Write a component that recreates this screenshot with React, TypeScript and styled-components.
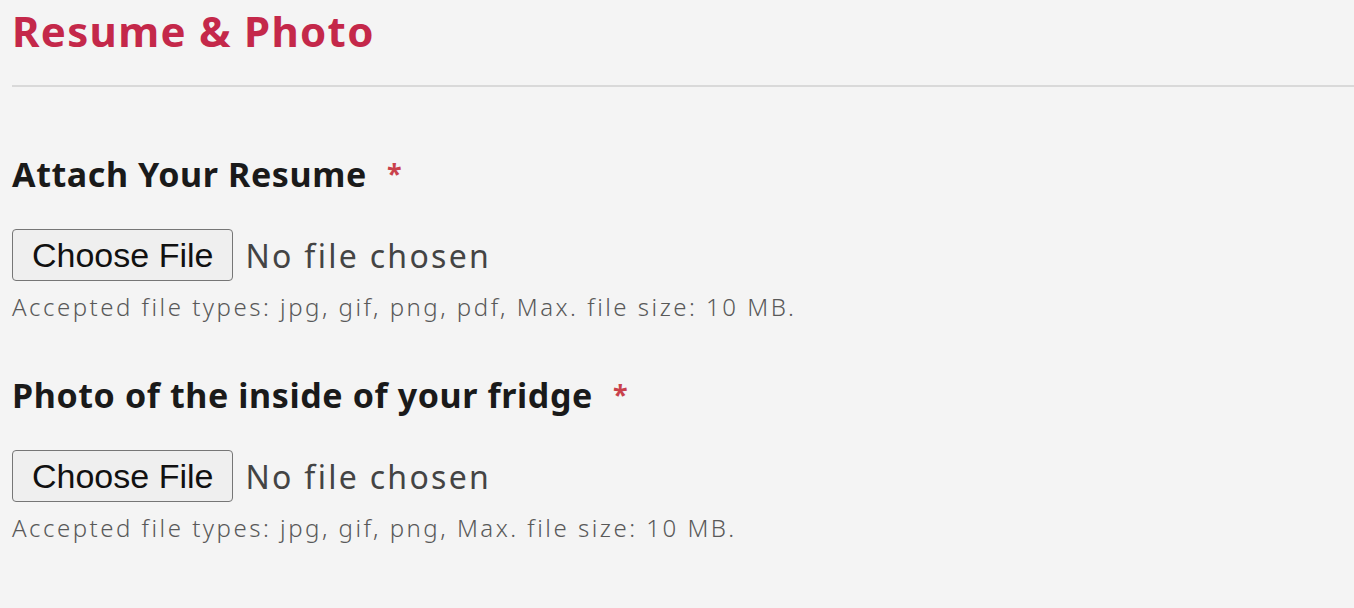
import React from "react"
import styled, { createGlobalStyle } from "styled-components"

const GlobalStyle = createGlobalStyle`
    html, body {
        margin: 0;
        padding: 0;
        background: #f4f4f4;
    }
    body {
        font-family: "Noto Sans", "Open Sans", sans-serif;
        color: #1c1c1c;
    }
`;

const Page = styled.div`
    padding: 8px 0 0 12px;
    min-height: 600px;
`;

const Title = styled.h2`
    margin: 0;
    font-size: 42px;
    line-height: 46px;
    font-weight: 700;
    color: #c4284a;
    letter-spacing: 1.3px;
`;

const Divider = styled.hr`
    margin: 31px 0 0;
    border: 0;
    border-top: 2px solid #d9d9d9;
`;

const Field = styled.div`
    display: flex;
    flex-direction: column;
    align-items: flex-start;
    margin-top: ${p => p.$first ? "67px" : "53px"};
`;

const Label = styled.label`
    display: flex;
    align-items: flex-start;
    gap: 20px;
    font-size: 34px;
    line-height: 40px;
    font-weight: 700;
    color: #1a1a1a;
    letter-spacing: 0.6px;
`;

const Required = styled.span`
    color: #c9414b;
    font-size: 27px;
    line-height: 27px;
    margin-top: 6px;
`;

const FileRow = styled.div`
    display: flex;
    align-items: center;
    gap: 12px;
    margin-top: 35px;
`;

const ChooseButton = styled.span`
    display: inline-flex;
    align-items: center;
    box-sizing: border-box;
    height: 52px;
    padding: 0 19px 0 19px;
    border: 1px solid #767676;
    border-radius: 4px;
    background: #efefef;
    font-family: "Liberation Sans", Arial, sans-serif;
    font-size: 34px;
    color: #111;
`;

const FileName = styled.span`
    font-size: 32px;
    font-weight: 400;
    color: #444;
    letter-spacing: 2.3px;
`;

const Help = styled.div`
    margin-top: 11px;
    font-size: 24px;
    line-height: 30px;
    font-weight: 300;
    color: #595959;
    letter-spacing: 2.5px;
`;

function FileField({ label, types, first }: { label: string; types: string; first?: boolean }) {
    return <Field $first={first}>
        <Label>
            {label}
            <Required>*</Required>
        </Label>
        <FileRow>
            <ChooseButton>Choose File</ChooseButton>
            <FileName>No file chosen</FileName>
        </FileRow>
        <Help>Accepted file types: {types}, Max. file size: 10 MB.</Help>
    </Field>
}

export default function App() {
    return <>
        <GlobalStyle />
        <Page>
            <Title>Resume &amp; Photo</Title>
            <Divider />
            <FileField first label="Attach Your Resume" types="jpg, gif, png, pdf" />
            <FileField label="Photo of the inside of your fridge" types="jpg, gif, png" />
        </Page>
    </>
}
